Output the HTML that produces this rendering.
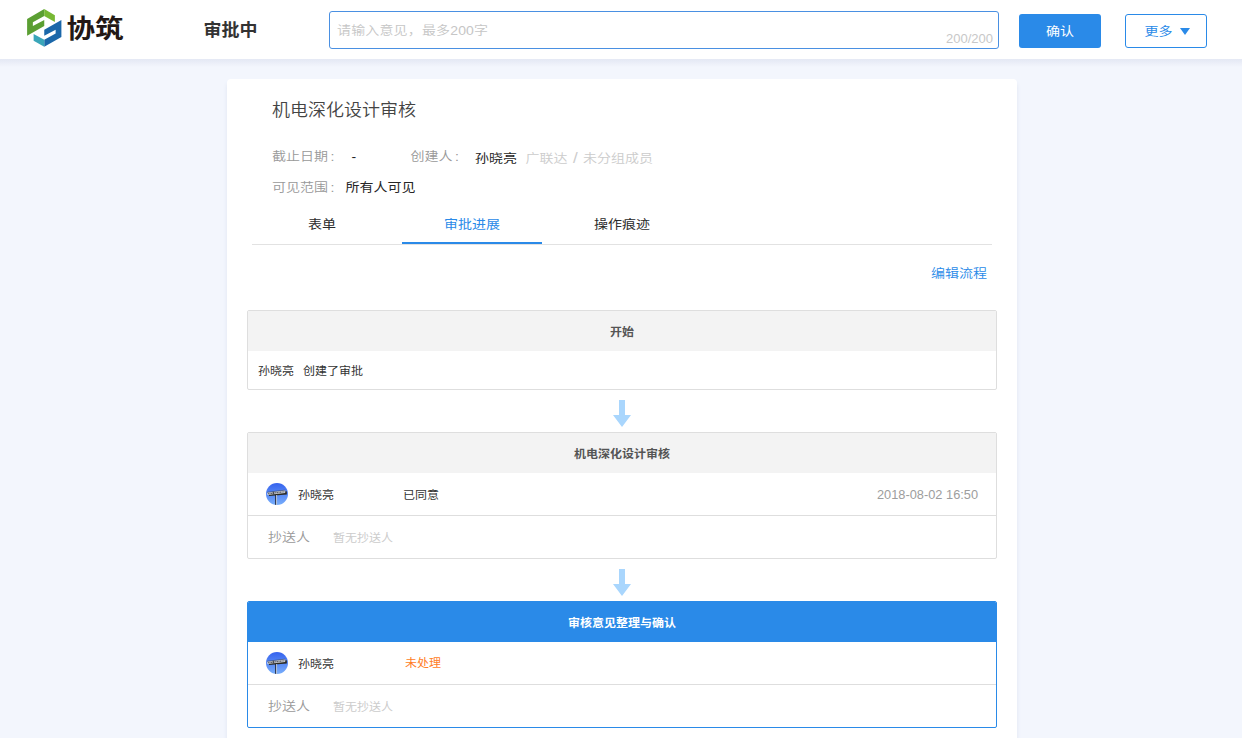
<!DOCTYPE html>
<html lang="zh-CN">
<head>
<meta charset="utf-8">
<title>协筑 - 审批</title>
<style>
*{box-sizing:border-box;margin:0;padding:0}
html,body{width:1242px;height:738px;overflow:hidden}
body{background:#f3f6fd;font-family:"Liberation Sans","Noto Sans CJK SC",sans-serif;color:#333;position:relative;font-size:14px;font-weight:350}
#title{transform:scaleY(.96)}
.lbl,.val,.dim,#ph,#edit,.tab,.sq{transform:scaleY(.89)}
.t12,.bh span{transform:scaleY(.94)}
.bh span{position:relative;top:.5px}
.sq,.bh span{display:inline-block}
.lat{transform:none}
.cl{margin-left:2.5px}
.sl{display:inline-block;width:15.5px;text-align:center;font-size:17px;line-height:14px;vertical-align:top;position:relative;top:-.5px}
.abs{position:absolute;white-space:nowrap;line-height:1}
/* header */
#hdr{position:absolute;left:0;top:0;width:1242px;height:59px;background:#fff}
#hsh{position:absolute;left:0;top:59px;width:1242px;height:8px;background:linear-gradient(#e5e9f5,#e7ebf6 25%,#edf0f9 60%,#f3f6fd)}
#logo{position:absolute;left:20px;top:4px;width:50px;height:50px}
#brand{left:66.5px;top:15px;font-size:28.5px;font-weight:700;color:#231815;transform:scaleY(.9)}
#status{left:203.5px;top:21px;font-size:18px;font-weight:700;color:#333;transform:scaleY(.92)}
#inp{position:absolute;left:329px;top:11px;width:670px;height:38px;border:1px solid #4a90e2;border-radius:3px;background:#fff}
#ph{left:337px;top:23.5px;font-size:14px;color:#c6c6c6;letter-spacing:.15px}
#cnt{left:946px;top:32px;font-size:13px;color:#c8c8c8}
#ok{position:absolute;left:1019px;top:14px;width:82px;height:34px;background:#2a8ae8;border-radius:3px;color:#fff;font-size:14px;text-align:center;line-height:35px;font-weight:400}
#more{position:absolute;left:1125px;top:14px;width:82px;height:34px;background:#fff;border:1px solid #2a8ae8;border-radius:3px;color:#2a8ae8;font-size:14px;line-height:33px;padding-left:18.5px;font-weight:400}
#more i{position:absolute;left:54px;top:13px;width:0;height:0;border-left:5px solid transparent;border-right:5px solid transparent;border-top:7px solid #2a8ae8}
/* card */
#card{position:absolute;left:227px;top:79px;width:790px;height:700px;background:#fff;border-radius:4px;box-shadow:0 4px 4px #dfe4f1}
#title{left:272px;top:101px;font-size:18px;color:#444}
.lbl{font-size:14px;color:#999}
.val{font-size:14px;color:#262626;font-weight:400}
.dim{font-size:14px;color:#ccc}
.tab{position:absolute;top:217px;width:140px;text-align:center;font-size:14px;color:#2b2b2b;line-height:16px;font-weight:400}
#tabline{position:absolute;left:252px;top:244px;width:740px;height:1px;background:#e2e2e2}
#tabact{position:absolute;left:402px;top:242px;width:140px;height:2px;background:#2a8ae8}
#edit{left:931px;top:267px;font-size:14px;color:#2a8ae8}
/* blocks */
.blk{position:absolute;left:247px;width:750px;border:1px solid #dedede;border-radius:2px;background:#fff;overflow:hidden}
.bh{position:absolute;left:0;top:0;width:100%;height:40px;background:#f3f3f3;text-align:center;font-size:12px;font-weight:700;color:#555;line-height:40px}
.blk.cur{border-color:#2a8ae8}
.blk.cur .bh{background:#2a8ae8;color:#fff;left:-1px;top:-1px;width:750px;height:41px;line-height:42px}
.sep{position:absolute;left:0;width:100%;height:1px;background:#dedede}
.t12{font-size:12px;color:#333;font-weight:400}
.arrow{position:absolute;left:612px;width:20px;height:27px}
.av{position:absolute;width:22px;height:22px}
</style>
</head>
<body>
<div id="hsh"></div>
<div id="hdr"></div>
<svg id="logo" viewBox="0 0 738 738">
  <polygon fill="#5b9f33" points="105,220 358,75 358,178 190,270 190,325 358,238 358,325 105,470"/>
  <polygon fill="#77b834" points="358,75 515,165 515,265 358,178"/>
  <polygon fill="#1b67a9" points="611,486 358,631 358,528 526,436 526,381 358,468 358,381 611,236"/>
  <polygon fill="#3aa6b9" points="358,631 201,541 201,441 358,528"/>
</svg>
<div class="abs" id="brand">协筑</div>
<div class="abs" id="status">审批中</div>
<div id="inp"></div>
<div class="abs" id="ph">请输入意见，最多200字</div>
<div class="abs" id="cnt">200/200</div>
<div id="ok"><span class="sq">确认</span></div>
<div id="more"><span class="sq">更多</span><i></i></div>

<div id="card"></div>
<div class="abs" id="title">机电深化设计审核</div>
<div class="abs lbl" style="left:272px;top:150px">截止日期<span class="cl">:</span></div>
<div class="abs val" style="left:351.5px;top:149.5px">-</div>
<div class="abs lbl" style="left:410.5px;top:150px">创建人<span class="cl">:</span></div>
<div class="abs val" style="left:475px;top:151.5px">孙晓亮</div>
<div class="abs dim" style="left:525.5px;top:151.5px">广联达<span class="sl">/</span>未分组成员</div>
<div class="abs lbl" style="left:272px;top:181px">可见范围<span class="cl">:</span></div>
<div class="abs val" style="left:345.5px;top:181px">所有人可见</div>

<div class="tab" style="left:252px">表单</div>
<div class="tab" style="left:402px;color:#2a8ae8">审批进展</div>
<div class="tab" style="left:552px">操作痕迹</div>
<div id="tabline"></div>
<div id="tabact"></div>
<div class="abs" id="edit">编辑流程</div>

<!-- block 1 -->
<div class="blk" style="top:310px;height:80px">
  <div class="bh"><span>开始</span></div>
</div>
<div class="abs t12" style="left:258px;top:365px">孙晓亮</div>
<div class="abs t12" style="left:303px;top:365px">创建了审批</div>

<svg class="arrow" style="top:400px" viewBox="0 0 20 27"><path fill="#a9d6fd" d="M7 0h6v15h6L10 27 1 15h6z"/></svg>

<!-- block 2 -->
<div class="blk" style="top:432px;height:127px">
  <div class="bh"><span>机电深化设计审核</span></div>
  <div class="sep" style="top:82px"></div>
</div>
<svg class="av" style="left:266px;top:483px" viewBox="0 0 22 22">
<defs><linearGradient id="sky" x1="0" y1="0" x2="0" y2="1"><stop offset="0" stop-color="#3562ee"/><stop offset="1" stop-color="#78aefb"/></linearGradient><clipPath id="avc"><circle cx="11" cy="11" r="11"/></clipPath></defs>
<g clip-path="url(#avc)"><rect width="22" height="22" fill="url(#sky)"/>
<polygon points="2.9,10.6 20.8,8.3 20.8,11.4 3,13.1" fill="#2b2a22"/>
<polygon points="1.3,9.4 19.2,7.3 19.2,9.9 1.3,12" fill="#d3d6dc"/><path d="M1.2 9.3 19.3 7.15" stroke="#2b2c30" stroke-width=".45" fill="none"/><path d="M2 10.75 18.6 8.75" stroke="#33363f" stroke-width="1.25" stroke-dasharray="1.1 .45 .7 .4 1.4 .5" opacity=".72" fill="none"/><polygon points="6.8,8.8 7.7,8.7 7.7,11.3 6.8,11.4" fill="#23252b"/>
<rect x="9.2" y="12" width="1" height="10" fill="#1d2230"/><rect x="10.1" y="12" width="1" height="10" fill="#b8c4d6"/></g></svg>
<div class="abs t12" style="left:298px;top:489px">孙晓亮</div>
<div class="abs t12" style="left:403px;top:489px">已同意</div>
<div class="abs t12 lat" style="left:877px;top:489px;color:#9d9d9d;font-size:12.8px;font-weight:350">2018-08-02 16:50</div>
<div class="abs lbl" style="left:268px;top:531px">抄送人</div>
<div class="abs t12" style="left:333px;top:532px;color:#ccc">暂无抄送人</div>

<svg class="arrow" style="top:569px" viewBox="0 0 20 27"><path fill="#a9d6fd" d="M7 0h6v15h6L10 27 1 15h6z"/></svg>

<!-- block 3 -->
<div class="blk cur" style="top:601px;height:127px">
  <div class="bh"><span>审核意见整理与确认</span></div>
  <div class="sep" style="top:82px"></div>
</div>
<svg class="av" style="left:266px;top:652px" viewBox="0 0 22 22">
<g clip-path="url(#avc)"><rect width="22" height="22" fill="url(#sky)"/>
<polygon points="2.9,10.6 20.8,8.3 20.8,11.4 3,13.1" fill="#2b2a22"/>
<polygon points="1.3,9.4 19.2,7.3 19.2,9.9 1.3,12" fill="#d3d6dc"/><path d="M1.2 9.3 19.3 7.15" stroke="#2b2c30" stroke-width=".45" fill="none"/><path d="M2 10.75 18.6 8.75" stroke="#33363f" stroke-width="1.25" stroke-dasharray="1.1 .45 .7 .4 1.4 .5" opacity=".72" fill="none"/><polygon points="6.8,8.8 7.7,8.7 7.7,11.3 6.8,11.4" fill="#23252b"/>
<rect x="9.2" y="12" width="1" height="10" fill="#1d2230"/><rect x="10.1" y="12" width="1" height="10" fill="#b8c4d6"/></g></svg>
<div class="abs t12" style="left:298px;top:658px">孙晓亮</div>
<div class="abs t12" style="left:405px;top:656.5px;color:#ff7d26">未处理</div>
<div class="abs lbl" style="left:268px;top:700px">抄送人</div>
<div class="abs t12" style="left:333px;top:701px;color:#ccc">暂无抄送人</div>
</body>
</html>
